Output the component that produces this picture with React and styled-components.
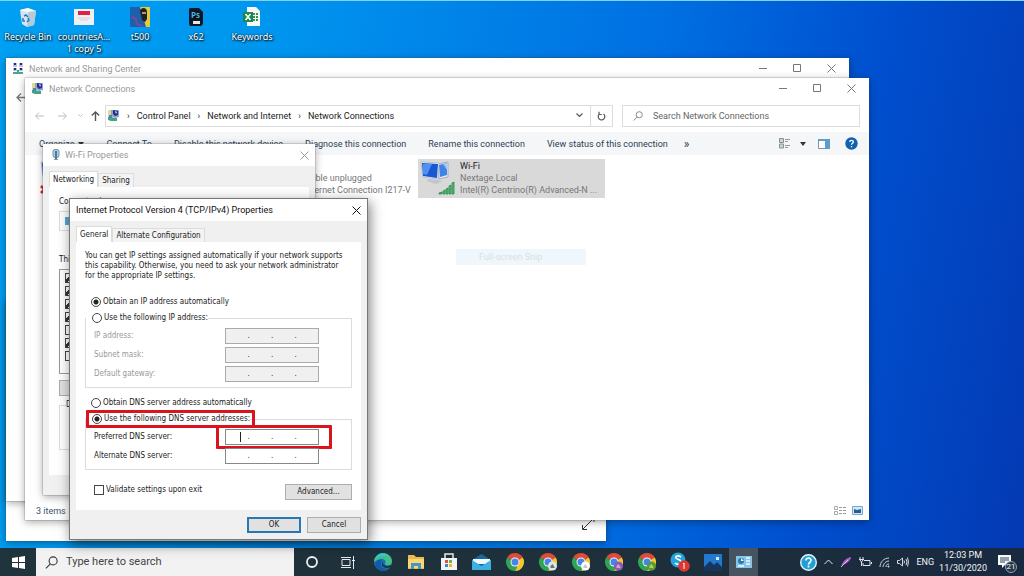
import React from 'react';
import styled, { createGlobalStyle, css } from 'styled-components';

const CHROMES = [
  { id: 'main' },
  { id: 'work', badge: '#dfe6ea', mark: '#5a7a85' },
  { id: 'team', badge: '#ffffff', mark: '#c9c9c9' },
  { id: 'personal', badge: '#8e5bb5', mark: '#c9a6e0' },
  { id: 'jobs', badge: '#5a9a32', mark: '#a5d07a' },
];

const COMMANDS = [
  'Connect To',
  'Disable this network device',
  'Diagnose this connection',
  'Rename this connection',
  'View status of this connection',
];

const PROTOCOLS = [true, true, true, true, false, true, false];

const CloseIcon = () => (
  <svg width="9" height="9" viewBox="0 0 9 9">
    <path d="M.5 .5l8 8M8.500 .5l-8 8" stroke="currentColor" fill="none" />
  </svg>
);

const WindowControls = () => (
  <Controls>
    <ControlButton aria-label="Minimize">
      <svg width="9" height="9" viewBox="0 0 9 9">
        <path d="M0 4.500h8" stroke="currentColor" />
      </svg>
    </ControlButton>
    <ControlButton aria-label="Maximize">
      <svg width="9" height="9" viewBox="0 0 9 9">
        <path d="M.5 .5h7v7h-7z" stroke="currentColor" fill="none" />
      </svg>
    </ControlButton>
    <ControlButton aria-label="Close">
      <CloseIcon />
    </ControlButton>
  </Controls>
);

const SharingIcon = () => (
  <svg width="12" height="13" viewBox="0 0 12 13">
    <path d="M1 1h4v4H1zM7 1h4v4H7zM1 6h4v3H1zM7 6h4v3H7z" fill="#b9c3e6" />
    <path d="M2 1h2v2H2zM8 1h2v2H8zM2 6h2v2H2zM8 6h2v2H8z" fill="#252a78" />
    <path d="M5 8h2v2h4v2H1v-2h4z" fill="#48a886" />
  </svg>
);

const ConnectionsIcon = () => (
  <svg width="13" height="13" viewBox="0 0 13 13">
    <path d="M1 1h4v8H1z" fill="#e6dc7c" />
    <path d="M4 1h8v7l-4 1-4-2z" fill="#8fa2dc" />
    <path d="M6 1l5 1v4L8 7 6 5z" fill="#26307f" />
    <path d="M8 2l2 1-1 2z" fill="#e8edff" />
    <path d="M1 8h4l2 1h3v3H4L1 11z" fill="#43a578" />
    <path d="M2 6h3v3H2z" fill="#4a80d8" />
  </svg>
);

const AdapterIcon = () => (
  <svg width="8" height="12" viewBox="0 0 8 12">
    <rect x="1" y="0.500" width="6" height="8" rx="2" fill="#a9c9df" stroke="#7795aa" />
    <path d="M4 2v8" stroke="#4b7ba0" strokeWidth="2" />
    <path d="M2 10h4v1H2z" fill="#8a9aa5" />
  </svg>
);

const MonitorsIcon = ({ kind }) => (
  <svg width="36" height="36" viewBox="0 0 36 36">
    <path d="M18 4l10-2v15l-9 2z" fill="#e5eaf0" stroke="#a5b0bb" />
    <path d="M19 5l8-2v12l-7 2z" fill="#3f83e6" />
    <path d="M23 4l4-1v7z" fill="#9cc6f8" />
    <path d="M1 2l18 1-1 16L3 17z" fill="#eef2f7" stroke="#9cabb8" strokeWidth=".6" />
    <path d="M2 3l16 1-1 14-14-2z" fill="#1757d2" />
    <path d="M3 4l9 0-5 11-4-1z" fill="#4f91f3" />
    <path d="M8 19l9 1 6 1-7 3-9-3z" fill="#bfc6cd" />
    {kind === 'wifi' ? (
      <path
        d="M19 33l3-1v2h-3zM23 31l2-1v4h-2zM26 29l2-1v6h-2zM29 26l2-1v9h-2zM32 23l2-1v12h-2z"
        fill="#62bd79"
        stroke="#25864a"
        strokeWidth=".8"
      />
    ) : (
      <path d="M1 26l7 7M8 26l-7 7" stroke="#cf2a2a" strokeWidth="2.500" />
    )}
  </svg>
);

const Magnifier = ({ size = 11 }) => (
  <svg width={size} height={size} viewBox="0 0 12 12" fill="none" stroke="currentColor">
    <circle cx="7.500" cy="4.500" r="3.700" />
    <path d="M5 7.200L.8 11.400" />
  </svg>
);

const Chrome = ({ badge, mark }) => (
  <svg width="20" height="20" viewBox="0 0 20 20">
    <path d="M10 10L2.200 5.500A9 9 0 0 1 17.800 5.500z" fill="#de4a3c" />
    <path d="M10 10L2.200 5.500A9 9 0 0 0 10 19l3.500-6z" fill="#2fa452" />
    <path d="M10 10l7.800-4.500A9 9 0 0 1 10 19l3.500-7z" fill="#f6c62f" />
    <circle cx="10" cy="10" r="4.500" fill="#f3f3f3" />
    <circle cx="10" cy="10" r="3.500" fill="#4484ec" />
    {badge && <circle cx="14.500" cy="14" r="4.500" fill={badge} />}
    {badge && <path d="M12.500 16v-2l2-2 2 3v1z" fill={mark} />}
  </svg>
);

const IpField = ({ label, disabled, caret, marked }) => (
  <FieldRow $disabled={disabled} role="group" aria-label={label}>
    <span>{label}</span>
    <IpBox $disabled={disabled} $marked={marked}>
      {[1, 2, 3, 4].map((part) => (
        <React.Fragment key={part}>
          {part > 1 && <Dot>.</Dot>}
          <Octet
            aria-label={`${label} ${part}`}
            disabled={disabled}
            $caret={caret && part === 1}
          />
        </React.Fragment>
      ))}
    </IpBox>
  </FieldRow>
);

const Radio = ({ children, name, checked, marked }) => (
  <Choice $marked={marked}>
    <RadioInput type="radio" name={name} defaultChecked={checked} />
    {children}
  </Choice>
);

const DesktopIcons = () => (
  <Shortcuts>
    <Shortcut>
      <svg width="20" height="20" viewBox="0 0 20 20">
        <path d="M2 3l8-2 8 3-2 14-7 2-5-3z" fill="#d7e6ef" />
        <path d="M2 3l8 2 8-1-8-3z" fill="#f8fcff" />
        <path d="M10 5l8-1-2 14-7 2z" fill="#b5cbd9" />
        <path d="M6 9l2-1 2 2M5 11l0 3h2M9 15l2-2-1-2" stroke="#2777d4" strokeWidth="1.500" fill="none" />
      </svg>
      Recycle Bin
    </Shortcut>
    <Shortcut>
      <svg width="20" height="20" viewBox="0 0 20 20">
        <path d="M0 2h20v16H0z" fill="#f1eff2" />
        <path d="M4 4h12v4H4z" fill="#dc2447" />
        <path d="M4 11h12M6 13h8" stroke="#cfd3dd" />
      </svg>
      countriesA... 1 copy 5
    </Shortcut>
    <Shortcut>
      <svg width="20" height="20" viewBox="0 0 20 20">
        <path d="M0 0h20v20H0z" fill="#1e5fae" />
        <path d="M10 0h10v20h-4z" fill="#e7ca35" />
        <path d="M10 4c1-4 7-4 7 1v7l-2 3-3-2z" fill="#1d2228" />
        <path d="M12 5h4v2h-4z" fill="#c79358" />
        <path d="M2 10l4 2 1 5 6 2" stroke="#784a91" strokeWidth="2" fill="none" />
      </svg>
      t500
    </Shortcut>
    <Shortcut>
      <svg width="20" height="20" viewBox="0 0 20 20">
        <path d="M4 1h9l4 4v12l-2 2H4l-1-2V2z" fill="#101a27" />
        <text x="5" y="11" fontFamily="Open Sans, sans-serif" fontSize="8" fontWeight="700" fill="#4cb4ed">Ps</text>
        <path d="M7 14h7v3H7z" fill="#e3e6ea" />
      </svg>
      x62
    </Shortcut>
    <Shortcut>
      <svg width="20" height="20" viewBox="0 0 20 20">
        <path d="M5 0h9l4 4v15H5z" fill="#f7faf8" />
        <path d="M11 7h5M11 10h5M11 13h5" stroke="#2e9659" strokeWidth="2" strokeDasharray="2 1" />
        <path d="M1 5h10v10H1z" fill="#17894a" />
        <path d="M3.500 7l5 6M8.500 7l-5 6" stroke="#fff" strokeWidth="1.600" />
      </svg>
      Keywords
    </Shortcut>
  </Shortcuts>
);

const SharingCenter = () => (
  <SharingWindow>
    <TitleBar>
      <SharingIcon />
      <h2>Network and Sharing Center</h2>
      <WindowControls />
    </TitleBar>
    <SharingNav>
      <NavButton aria-label="Back">
        <svg width="11" height="9" viewBox="0 0 11 9" fill="none" stroke="#777" strokeWidth="1.300">
          <path d="M5 .5l-4 4 4 4M1 4.500h10" />
        </svg>
      </NavButton>
    </SharingNav>
  </SharingWindow>
);

const NetworkConnections = () => (
  <ConnectionsWindow>
    <TitleBar>
      <ConnectionsIcon />
      <h2>Network Connections</h2>
      <WindowControls />
    </TitleBar>
    <AddressRow>
      <NavButton aria-label="Back" $faint>
        <svg width="10" height="8" viewBox="0 0 10 8" fill="none" stroke="currentColor">
          <path d="M4 .5L.5 4 4 7.500M1 4h8" />
        </svg>
      </NavButton>
      <NavButton aria-label="Forward" $faint>
        <svg width="10" height="8" viewBox="0 0 10 8" fill="none" stroke="currentColor">
          <path d="M6 .5L9.500 4 6 7.500M9 4H1" />
        </svg>
      </NavButton>
      <NavButton aria-label="Recent" $faint $narrow>
        <svg width="5" height="4" viewBox="0 0 5 4" fill="none" stroke="currentColor">
          <path d="M.5 .5l2 2 2-2" />
        </svg>
      </NavButton>
      <NavButton aria-label="Up" $narrow>
        <svg width="9" height="10" viewBox="0 0 9 10" fill="none" stroke="#555" strokeWidth="1.400">
          <path d="M.8 4.500L4.500 1l3.700 3.500M4.500 1v9" />
        </svg>
      </NavButton>
      <Breadcrumb aria-label="Address">
        <ConnectionsIcon />
        <i>›</i>
        <a href="#control-panel">Control Panel</a>
        <i>›</i>
        <a href="#network">Network and Internet</a>
        <i>›</i>
        <a href="#connections">Network Connections</a>
        <CrumbEnd>
          <IconButton aria-label="Previous locations">
            <svg width="7" height="5" viewBox="0 0 7 5" fill="none" stroke="#555" strokeWidth="1.200">
              <path d="M.5 .5l3 3 3-3" />
            </svg>
          </IconButton>
          <RefreshButton aria-label="Refresh">
            <svg width="9" height="10" viewBox="0 0 9 10" fill="none" stroke="#555" strokeWidth="1.200">
              <path d="M2.500 3A3.300 3.300 0 1 0 6.500 3M2 .8v2.700h2.700" />
            </svg>
          </RefreshButton>
        </CrumbEnd>
      </Breadcrumb>
      <SearchBox>
        <Magnifier size={10} />
        <input aria-label="Search" placeholder="Search Network Connections" />
      </SearchBox>
    </AddressRow>
    <CommandBar>
      <Command>
        Organize
        <svg width="6" height="4" viewBox="0 0 6 4">
          <path d="M0 0h6L3 4z" fill="#333" />
        </svg>
      </Command>
      {COMMANDS.map((name) => (
        <Command key={name}>{name}</Command>
      ))}
      <MoreCommands aria-label="More commands">»</MoreCommands>
      <ViewTools>
        <IconButton aria-label="Change view">
          <svg width="12" height="11" viewBox="0 0 12 11">
            <path d="M.5 .5h4v4h-4zM.5 6h4v4h-4z" fill="#c4dcc6" stroke="#8a8f94" />
            <path d="M6 1.500h5M6 3.500h3M6 7.500h5M6 9.500h3" stroke="#999" />
          </svg>
        </IconButton>
        <IconButton aria-label="View options" $narrow>
          <svg width="6" height="4" viewBox="0 0 6 4">
            <path d="M0 0h6L3 4z" fill="#333" />
          </svg>
        </IconButton>
        <IconButton aria-label="Preview pane" $wide>
          <svg width="12" height="10" viewBox="0 0 12 10">
            <path d="M.5 .5h11v9H.5z" fill="#fff" stroke="#7f93a5" />
            <path d="M0 0h12v2H0zM7 2h5v8H7z" fill="#5d9dce" />
          </svg>
        </IconButton>
        <IconButton aria-label="Help" $wide>
          <svg width="13" height="13" viewBox="0 0 13 13">
            <circle cx="6.500" cy="6.500" r="6.200" fill="#1162ae" />
            <path d="M4.800 5c0-2.300 3.600-2.200 3.500 0 0 1.300-1.800 1.300-1.800 2.800M6.500 9v1.200" stroke="#fff" strokeWidth="1.300" fill="none" />
          </svg>
        </IconButton>
      </ViewTools>
    </CommandBar>
    <Adapters>
      <Adapter>
        <MonitorsIcon />
      </Adapter>
      <Adapter>
        <MonitorsIcon />
        <AdapterText>
          <b>Ethernet</b>
          <span>Network cable unplugged</span>
          <span>Intel(R) Ethernet Connection I217-V</span>
        </AdapterText>
      </Adapter>
      <Adapter $selected>
        <MonitorsIcon kind="wifi" />
        <AdapterText>
          <b>Wi-Fi</b>
          <span>Nextage.Local</span>
          <span>Intel(R) Centrino(R) Advanced-N ...</span>
        </AdapterText>
      </Adapter>
    </Adapters>
    <StatusBar>
      <span>3 items</span>
      <svg width="12" height="9" viewBox="0 0 12 9">
        <path d="M.5 .5h3v3h-3zM.5 5.500h3v3h-3z" fill="none" stroke="#aaa" />
        <path d="M5 1.500h7M5 4.500h7M5 7.500h7" stroke="#999" strokeDasharray="3 1" />
      </svg>
      <svg width="12" height="9" viewBox="0 0 12 9">
        <path d="M.5 .5h10v8H.5z" fill="#d2e8fa" stroke="#73a9d3" />
        <path d="M2 3l3 1 4-1v4H2z" fill="#2c5e87" />
      </svg>
    </StatusBar>
  </ConnectionsWindow>
);

const WifiProperties = () => (
  <WifiDialog>
    <TitleBar $dialog>
      <AdapterIcon />
      <h2>Wi-Fi Properties</h2>
      <ControlButton aria-label="Close">
        <CloseIcon />
      </ControlButton>
    </TitleBar>
    <DialogBody>
      <Tabs>
        <Tab $active>Networking</Tab>
        <Tab>Sharing</Tab>
      </Tabs>
      <WifiPage>
        <span>Connect using:</span>
        <AdapterName>
          <svg width="12" height="10" viewBox="0 0 12 10">
            <path d="M0 1h11v8H0z" fill="#54a9d8" />
          </svg>
        </AdapterName>
        <span>This</span>
        <ItemList>
          {PROTOCOLS.map((on, index) => (
            <Tick key={index} type="checkbox" aria-label={`Item ${index + 1}`} defaultChecked={on} />
          ))}
        </ItemList>
        <PushButton aria-label="Install" />
        <Description>
          <legend>Description</legend>
        </Description>
      </WifiPage>
    </DialogBody>
  </WifiDialog>
);

const IpProperties = () => (
  <IpDialog role="dialog" aria-label="Internet Protocol Version 4 (TCP/IPv4) Properties">
    <TitleBar $dialog $active>
      <h2>Internet Protocol Version 4 (TCP/IPv4) Properties</h2>
      <ControlButton aria-label="Close">
        <CloseIcon />
      </ControlButton>
    </TitleBar>
    <DialogBody>
      <Tabs>
        <Tab $active>General</Tab>
        <Tab>Alternate Configuration</Tab>
      </Tabs>
      <IpPage>
        <p>
          You can get IP settings assigned automatically if your network supports
          <br />
          this capability. Otherwise, you need to ask your network administrator
          <br />
          for the appropriate IP settings.
        </p>
        <Radio name="ip" checked>Obtain an IP address automatically</Radio>
        <Group>
          <legend>
            <Radio name="ip">Use the following IP address:</Radio>
          </legend>
          <IpField label="IP address:" disabled />
          <IpField label="Subnet mask:" disabled />
          <IpField label="Default gateway:" disabled />
        </Group>
        <Radio name="dns">Obtain DNS server address automatically</Radio>
        <Group>
          <legend>
            <Radio name="dns" checked marked>Use the following DNS server addresses:</Radio>
          </legend>
          <IpField label="Preferred DNS server:" caret marked />
          <IpField label="Alternate DNS server:" />
        </Group>
        <PageFooter>
          <Choice>
            <Tick type="checkbox" />
            Validate settings upon exit
          </Choice>
          <PushButton $wide>Advanced...</PushButton>
        </PageFooter>
      </IpPage>
      <DialogButtons>
        <PushButton $primary>OK</PushButton>
        <PushButton>Cancel</PushButton>
      </DialogButtons>
    </DialogBody>
  </IpDialog>
);

const TaskbarApps = () => (
  <Apps>
    <TaskButton aria-label="Cortana" $size={36}>
      <svg width="14" height="14" viewBox="0 0 14 14">
        <circle cx="7" cy="7" r="5" fill="none" stroke="#eef2f4" strokeWidth="1.800" />
      </svg>
    </TaskButton>
    <TaskButton aria-label="Task view" $size={36}>
      <svg width="14" height="13" viewBox="0 0 14 13" fill="none" stroke="#e4e9eb">
        <path d="M1 3.500h8v6H1zM0 1.500h10M0 11.500h10M12.500 0v13M11 4.500h3" />
      </svg>
    </TaskButton>
    <TaskButton aria-label="Edge">
      <svg width="20" height="20" viewBox="0 0 20 20">
        <circle cx="10" cy="10" r="9" fill="#1973c5" />
        <path d="M1 10C1-1 18-2 19 9c0 5-6 6-7 3 2-3-1-6-5-5-3 1-5 2-6 3z" fill="#43bf86" />
        <path d="M2 7C5 0 12 0 16 4c-5-1-11 0-14 3z" fill="#32c5dc" />
        <path d="M9 8c-3 3-1 9 5 9l3-1c-3 4-11 4-14-1-2-4 1-8 6-7z" fill="#1459a4" />
        <path d="M10 9c-1 4 3 6 8 4v2c-5 3-12-1-8-6z" fill="#213641" />
      </svg>
    </TaskButton>
    <TaskButton aria-label="File Explorer">
      <svg width="18" height="16" viewBox="0 0 18 16">
        <path d="M1 1h6l2 2h8v12H1z" fill="#eeb94e" />
        <path d="M1 5h16v9H1z" fill="#fad76f" />
        <path d="M4 9h10v6h-3v-3H7v3H4z" fill="#4497ce" />
      </svg>
    </TaskButton>
    <TaskButton aria-label="Store">
      <svg width="18" height="20" viewBox="0 0 18 20">
        <path d="M5 6V2h8v4" fill="none" stroke="#e6eaec" strokeWidth="1.500" />
        <path d="M1 6h16v12H1z" fill="#f3f4f5" />
        <path d="M5 8h3v3H5z" fill="#e05036" />
        <path d="M9 8h3v3H9z" fill="#76b335" />
        <path d="M5 12h3v3H5z" fill="#2794d1" />
        <path d="M9 12h3v3H9z" fill="#efb628" />
      </svg>
    </TaskButton>
    <TaskButton aria-label="Mail">
      <svg width="19" height="18" viewBox="0 0 19 18">
        <path d="M0 7l9.500-6L19 7v10H0z" fill="#15679e" />
        <path d="M1 6h17v5H1z" fill="#f1f8fb" />
        <path d="M0 7l9.500 6L19 7v10H0z" fill="#3eafe4" />
      </svg>
    </TaskButton>
    {CHROMES.map(({ id, badge, mark }) => (
      <TaskButton key={id} aria-label={`Chrome ${id}`}>
        <Chrome badge={badge} mark={mark} />
      </TaskButton>
    ))}
    <TaskButton aria-label="Skype">
      <svg width="20" height="20" viewBox="0 0 20 20">
        <circle cx="8" cy="8" r="7.500" fill="#22a4dc" />
        <path d="M11 5C8 3 5 4 6 6s5 1 5 4-4 3-6 1" fill="none" stroke="#fff" strokeWidth="1.600" />
        <circle cx="14" cy="14" r="5.800" fill="#dc3831" />
        <path d="M13 12l1-1v6" fill="none" stroke="#fff" />
      </svg>
    </TaskButton>
    <TaskButton aria-label="Photos">
      <svg width="18" height="17" viewBox="0 0 18 17">
        <path d="M0 0h18v17H0z" fill="#2378d0" />
        <path d="M0 13l6-6 4 4 3-3 5 5v4H0z" fill="#16365f" />
        <path d="M12 3h3v3h-3z" fill="#d1eafc" />
      </svg>
    </TaskButton>
    <TaskButton aria-label="Control Panel" $size={29} $active>
      <svg width="16" height="12" viewBox="0 0 16 12">
        <path d="M0 0h16v12H0z" fill="#87c5e8" />
        <path d="M10 2h4M10 5h4M10 8h4M2 10h6" stroke="#f1fafe" strokeWidth="1.500" />
        <circle cx="5" cy="5" r="3" fill="#247cb0" />
        <path d="M5 2v3h3z" fill="#e9f7fe" />
      </svg>
    </TaskButton>
  </Apps>
);

const Tray = () => (
  <TrayArea>
    <svg width="17" height="17" viewBox="0 0 17 17">
      <circle cx="8.500" cy="8.500" r="7.800" fill="#209fd3" stroke="#e2f5fb" strokeWidth="1.400" />
      <path d="M6 6.500c0-3.500 5-3.200 5 0 0 2-2.500 2-2.500 4M8.500 11.500v2" stroke="#fff" strokeWidth="1.700" fill="none" />
    </svg>
    <svg width="9" height="6" viewBox="0 0 9 6" fill="none" stroke="#e8ecef">
      <path d="M.5 5l4-4 4 4" />
    </svg>
    <svg width="12" height="12" viewBox="0 0 12 12">
      <path d="M1 11C2 6 6 2 11 1c0 3-4 7-9 8z" fill="#ac63cd" />
      <path d="M1 11l7-7" stroke="#e0b9ee" />
    </svg>
    <svg width="13" height="10" viewBox="0 0 13 10" fill="none" stroke="#e0e5e9">
      <path d="M5 3.500h6v5H4V6M12.500 5v2M1 0v2M4 0v2M0 2.500h5M1 3l1.500 2L4 3M2.500 5v4" />
    </svg>
    <svg width="11" height="11" viewBox="0 0 11 11" fill="none" stroke="#ccd3d9">
      <path d="M1 10C1 5 5 1 10 1M4 10c0-3 3-6 6-6M7 10c0-2 1-3 3-3" />
      <path d="M9 9h1v1H9z" />
    </svg>
    <svg width="12" height="10" viewBox="0 0 12 10" fill="none" stroke="#d5dce1">
      <path d="M.5 3.500h2l3-2.500v8l-3-2.500h-2zM7 3.500q1 1.500 0 3M9 2q2 3 0 6M10.500 .5q2 4.500 0 9" />
    </svg>
    <span>ENG</span>
    <Clock>
      <span>12:03 PM</span>
      <span>11/30/2020</span>
    </Clock>
    <Notifications aria-label="Notifications">
      <svg width="16" height="14" viewBox="0 0 16 14">
        <path d="M1 0h13v10H8l-3 3v-3H1z" fill="#f6f8f9" />
        <path d="M3 3h9M3 5h9M3 7h5" stroke="#34465a" />
      </svg>
      <NotificationCount>21</NotificationCount>
    </Notifications>
  </TrayArea>
);

const App = () => {
  return (
    <Screen>
      <GlobalStyle />
      <Desktop>
        <DesktopIcons />
        <BackWindow>
          <svg width="14" height="14" viewBox="0 0 14 14" fill="none" stroke="#333">
            <path d="M13 1L2 12M1.500 8v4.500H6M9 1h4v4" />
          </svg>
        </BackWindow>
        <SharingCenter />
        <NetworkConnections />
        <WifiProperties />
        <IpProperties />
        <SnipHint>Full-screen Snip</SnipHint>
      </Desktop>
      <Taskbar>
        <StartButton aria-label="Start">
          <svg width="13" height="13" viewBox="0 0 13 13">
            <path d="M0 2l6-1v5H0zM7 1l6-1v6H7zM0 7h6v5l-6-1zM7 7h6v6l-6-1z" fill="#fff" />
          </svg>
        </StartButton>
        <TaskSearch>
          <Magnifier size={13} />
          <input aria-label="Search Windows" placeholder="Type here to search" />
        </TaskSearch>
        <TaskbarApps />
        <Tray />
      </Taskbar>
    </Screen>
  );
};

const GlobalStyle = createGlobalStyle`
  * {
    box-sizing: border-box;
  }
  body {
    margin: 0;
    font-family: Roboto, 'Noto Sans', sans-serif;
    font-size: 9px;
    line-height: 12px;
    color: #222;
  }
  button, input {
    font: inherit;
    color: inherit;
    padding: 0;
    margin: 0;
    border: 0;
    background: none;
  }
  svg {
    display: block;
    flex: none;
  }
  h2, p {
    margin: 0;
    font: inherit;
  }
`;

const Screen = styled.div`
  display: flex;
  flex-direction: column;
  height: 100vh;
  overflow: hidden;
`;

const Desktop = styled.main`
  position: relative;
  flex: 1;
  min-height: 0;
  background: linear-gradient(100deg, #00a0f2 0%, #0095ee 25%, #006fe2 60%, #004fce 80%, #0439b3 100%);
  box-shadow: inset 0 1px #7fd4f6;
`;

const Shortcuts = styled.ul`
  list-style: none;
  display: flex;
  margin: 0;
  padding: 7px 0 0;
  font-family: 'Noto Sans', 'Open Sans', sans-serif;
`;

const Shortcut = styled.li`
  width: 56px;
  display: flex;
  flex-direction: column;
  align-items: center;
  gap: 4px;
  text-align: center;
  color: #fff;
  text-shadow: 1px 1px 2px #000, 0 0 2px #023;
`;

const Window = styled.section`
  position: absolute;
  display: flex;
  flex-direction: column;
  background: #fff;
  box-shadow: 0 2px 8px rgba(0, 0, 0, 0.35), 0 0 1px #555;
`;

const BackWindow = styled(Window)`
  left: 6px;
  right: 418px;
  top: 300px;
  bottom: 7px;
  align-items: flex-end;
  justify-content: flex-end;
  padding: 10px 11px;
`;

const SharingWindow = styled(Window)`
  left: 6px;
  right: 175px;
  top: 58px;
  bottom: 47px;
`;

const ConnectionsWindow = styled(Window)`
  left: 25px;
  right: 155px;
  top: 78px;
  bottom: 28px;
`;

const WifiDialog = styled(Window)`
  left: 43px;
  top: 144px;
  width: 272px;
`;

const IpDialog = styled(Window)`
  left: 69px;
  top: 198px;
  width: 299px;
  border: 1px solid #777;
  box-shadow: 2px 4px 12px rgba(0, 0, 0, 0.5);
`;

const TitleBar = styled.header`
  display: flex;
  align-items: center;
  gap: 5px;
  height: ${({ $dialog }) => ($dialog ? '22px' : '21px')};
  padding-left: ${({ $dialog, $active }) => ($dialog && !$active ? '9px' : '6px')};
  color: ${({ $active }) => ($active ? '#111' : '#999')};

  h2 {
    flex: 1;
    white-space: nowrap;
  }
`;

const Controls = styled.div`
  display: flex;
  padding-right: 1px;
  color: #777;
`;

const ControlButton = styled.button`
  display: grid;
  place-items: center;
  width: 34px;
  height: 20px;

  ${TitleBar} > & {
    width: 22px;
  }
`;

const SharingNav = styled.nav`
  padding: 12px 4px;
`;

const NavButton = styled.button`
  display: grid;
  place-items: center;
  width: ${({ $narrow }) => ($narrow ? '15px' : '22px')};
  height: 12px;
  color: ${({ $faint }) => ($faint ? '#bbb' : '#555')};
`;

const AddressRow = styled.nav`
  display: flex;
  align-items: center;
  height: 33px;
  padding: 0 9px 0 4px;
`;

const Breadcrumb = styled.div`
  flex: 1;
  display: flex;
  align-items: center;
  gap: 7px;
  height: 22px;
  margin: 0 9px 0 2px;
  padding-left: 1px;
  border: 1px solid #dcdcdc;

  a {
    color: #222;
    text-decoration: none;
    white-space: nowrap;
  }
  i {
    font-style: normal;
  }
`;

const CrumbEnd = styled.div`
  display: flex;
  align-self: stretch;
  margin-left: auto;
`;

const IconButton = styled.button`
  display: grid;
  place-items: center;
  width: ${({ $wide, $narrow }) => ($wide ? '27px' : $narrow ? '12px' : '22px')};
`;

const RefreshButton = styled(IconButton)`
  border-left: 1px solid #dcdcdc;
`;

const SearchBox = styled.label`
  flex: 0 0 238px;
  display: flex;
  align-items: center;
  gap: 10px;
  height: 22px;
  padding: 0 10px;
  border: 1px solid #dcdcdc;
  color: #777;

  input {
    flex: 1;
    min-width: 0;
    outline: none;
  }
  input::placeholder {
    color: #666;
    opacity: 1;
  }
`;

const CommandBar = styled.div`
  display: flex;
  align-items: center;
  gap: 22px;
  height: 23px;
  padding: 0 4px 0 14px;
  background: #f5f6f8;
  color: #2c3e56;
`;

const Command = styled.button`
  display: flex;
  align-items: center;
  gap: 4px;
  white-space: nowrap;
`;

const MoreCommands = styled(Command)`
  margin-left: -6px;
  font-size: 12px;
`;

const ViewTools = styled.div`
  display: flex;
  gap: 1px;
  margin-left: auto;
`;

const Adapters = styled.div`
  flex: 1;
  display: flex;
  align-items: flex-start;
  gap: 3px;
  padding: 4px 13px;
`;

const Adapter = styled.article`
  display: flex;
  gap: 4px;
  width: 187px;
  height: 39px;
  padding: 1px 2px;
  background: ${({ $selected }) => ($selected ? '#d9d9d9' : 'transparent')};
`;

const AdapterText = styled.div`
  display: flex;
  flex-direction: column;
  color: #777;
  white-space: nowrap;

  b {
    font-weight: 400;
    color: #222;
  }
`;

const StatusBar = styled.footer`
  display: flex;
  align-items: center;
  gap: 6px;
  height: 19px;
  padding: 0 5px 0 11px;
  color: #3d526b;

  span {
    margin-right: auto;
  }
`;

const DialogBody = styled.div`
  padding: 5px 6px 6px;
  background: #f0f0f0;
  font-family: 'DejaVu Sans Condensed', 'DejaVu Sans', sans-serif;
  font-size: 8px;
  line-height: 10px;
`;

const Tabs = styled.div`
  display: flex;
  align-items: flex-end;
`;

const Tab = styled.button`
  height: ${({ $active }) => ($active ? '16px' : '14px')};
  padding: 0 3px;
  border: 1px solid #dcdcdc;
  border-bottom: 0;
  background: ${({ $active }) => ($active ? '#fff' : '#f3f3f3')};
  white-space: nowrap;
`;

const Page = styled.div`
  display: flex;
  flex-direction: column;
  background: #fff;
`;

const WifiPage = styled(Page)`
  align-items: flex-start;
  padding: 10px 10px 25px;
  margin-bottom: 14px;
`;

const AdapterName = styled.div`
  width: 100%;
  height: 20px;
  margin: 4px 0 24px;
  padding: 4px 5px;
  border: 1px solid #ddd;
`;

const ItemList = styled.div`
  display: flex;
  flex-direction: column;
  gap: 3px;
  width: 100%;
  height: 105px;
  margin: 4px 0 6px;
  padding: 3px 5px;
  border: 1px solid #999;
`;

const Description = styled.fieldset`
  width: 100%;
  height: 50px;
  margin: 4px 0 0;
  padding: 0 6px;
  border: 1px solid #ddd;

  legend {
    padding: 0;
  }
`;

const IpPage = styled(Page)`
  padding: 9px 9px 10px;

  p {
    margin-bottom: 15px;
    white-space: nowrap;
  }
`;

const redFrame = css`
  &::after {
    content: '';
    position: absolute;
    border: 3px solid #d9141d;
    border-radius: 1px;
    pointer-events: none;
  }
`;

const Choice = styled.label`
  position: relative;
  display: flex;
  align-items: center;
  gap: 2px;
  height: 12px;
  padding-left: 6px;
  white-space: nowrap;

  ${({ $marked }) => $marked && redFrame}
  &::after {
    inset: -3px -5px -3px 0;
  }
`;

const RadioInput = styled.input`
  appearance: none;
  width: 10px;
  height: 10px;
  border: 1px solid #444;
  border-radius: 50%;
  background: #fff;

  &:checked {
    background: radial-gradient(#222 0 2px, #fff 3px);
  }
`;

const Tick = styled.input`
  appearance: none;
  width: 10px;
  height: 10px;
  border: 1px solid #444;

  &:checked {
    background: linear-gradient(135deg, #fff 35%, #333 35% 60%, #fff 60%);
  }
`;

const Group = styled.fieldset`
  display: flex;
  flex-direction: column;
  gap: 3px;
  min-width: 0;
  margin: 4px 0 9px;
  padding: 4px 32px 5px 8px;
  border: 1px solid #dcdcdc;

  legend {
    margin-left: -8px;
    padding: 0;
  }
`;

const FieldRow = styled.div`
  display: flex;
  align-items: center;
  justify-content: space-between;
  color: ${({ $disabled }) => ($disabled ? '#999' : '#222')};
`;

const IpBox = styled.div`
  position: relative;
  display: flex;
  align-items: center;
  width: 94px;
  height: 16px;
  border: 1px solid ${({ $disabled }) => ($disabled ? '#aaa' : '#888')};
  background: ${({ $disabled }) => ($disabled ? '#f0f0f0' : '#fff')};

  ${({ $marked }) => $marked && redFrame}
  &::after {
    inset: -5px -14px -5px -10px;
  }
`;

const Octet = styled.input`
  flex: 1;
  min-width: 0;
  text-align: center;
  outline: none;
  ${({ $caret }) =>
    $caret && 'background: linear-gradient(#222, #222) 14px center / 1px 10px no-repeat;'}
`;

const Dot = styled.span`
  width: 2px;
  color: #333;
`;

const PageFooter = styled.div`
  display: flex;
  justify-content: space-between;
  margin-top: 5px;
  padding-left: 3px;
`;

const DialogButtons = styled.div`
  display: flex;
  justify-content: flex-end;
  gap: 6px;
  padding-top: 7px;
`;

const PushButton = styled.button`
  width: ${({ $wide }) => ($wide ? '67px' : '54px')};
  height: 16px;
  border: ${({ $primary }) => ($primary ? '2px solid #2878b5' : '1px solid #adadad')};
  background: #e1e1e1;
`;

const SnipHint = styled.div`
  position: absolute;
  left: 456px;
  top: 249px;
  width: 130px;
  height: 16px;
  padding: 2px 23px;
  background: #f0f7fc;
  color: #d9dfe4;
  white-space: nowrap;
`;

const Taskbar = styled.footer`
  display: flex;
  align-items: stretch;
  height: 28px;
  background: linear-gradient(90deg, #20343d, #1e303b 60%, #192940);
  color: #f3f5f6;
`;

const StartButton = styled.button`
  display: grid;
  place-items: center;
  width: 36px;
`;

const TaskSearch = styled.label`
  display: flex;
  align-items: center;
  gap: 8px;
  width: 258px;
  padding-left: 9px;
  background: #f2f2f2;
  color: #333;
  font-size: 11px;

  input {
    flex: 1;
    min-width: 0;
    outline: none;
  }
  input::placeholder {
    color: #444;
    opacity: 1;
  }
`;

const Apps = styled.div`
  display: flex;
`;

const TaskButton = styled.button`
  display: grid;
  place-items: center;
  width: ${({ $size = 33 }) => $size}px;
  background: ${({ $active }) => ($active ? '#45545f' : 'transparent')};
`;

const TrayArea = styled.div`
  display: flex;
  align-items: center;
  gap: 7px;
  margin-left: auto;
  padding-right: 11px;
`;

const Clock = styled.div`
  display: flex;
  flex-direction: column;
  align-items: center;
  margin: 0 3px 0 -2px;
  line-height: 13px;
`;

const Notifications = styled.button`
  position: relative;
`;

const NotificationCount = styled.span`
  position: absolute;
  right: -4px;
  bottom: -4px;
  width: 12px;
  height: 12px;
  border: 1px solid #93a0ac;
  border-radius: 50%;
  background: #27384b;
  font-size: 8px;
  line-height: 10px;
`;

export default App;
